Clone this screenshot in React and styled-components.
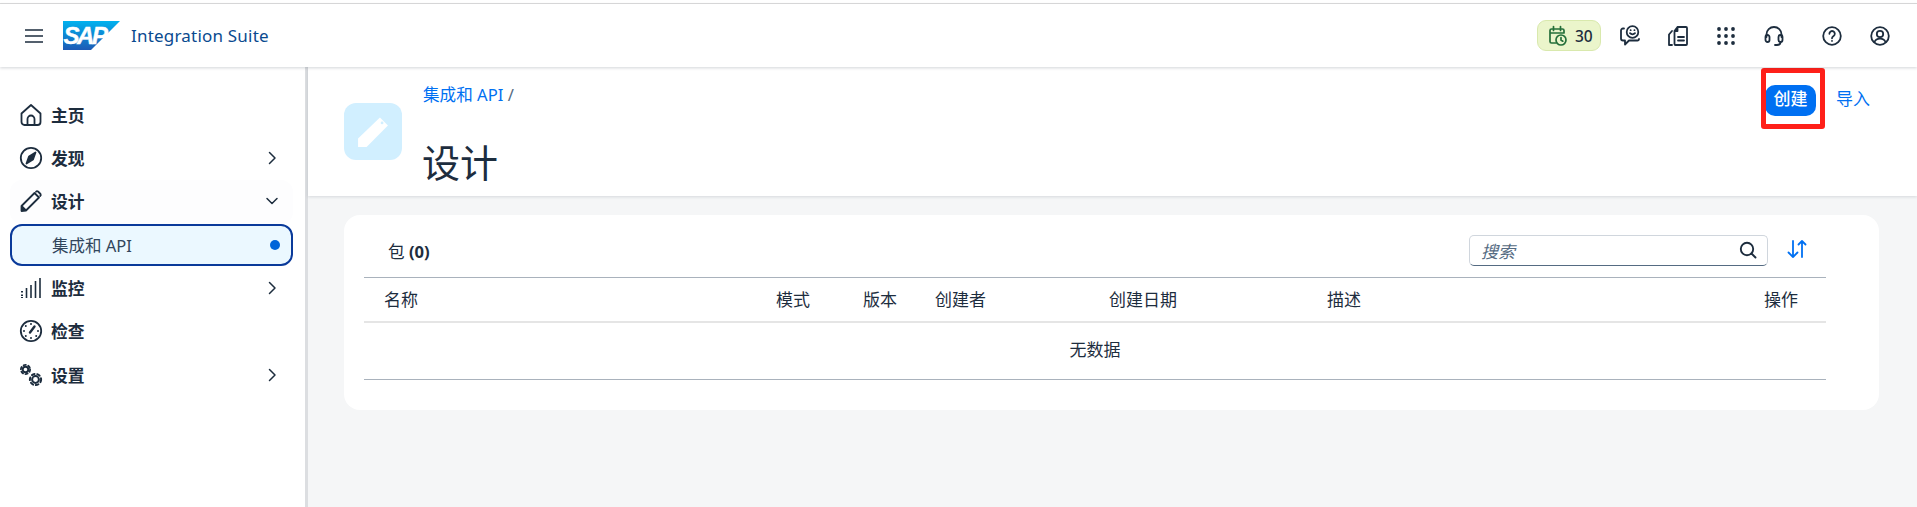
import React from "react";
import styled, { createGlobalStyle } from "styled-components";

const Global = createGlobalStyle`
  html, body { margin: 0; padding: 0; height: 100%; overflow: hidden; background: #fff; }
  * { box-sizing: border-box; }
  body { font-family: "Noto Sans", "Noto Sans CJK SC", sans-serif; font-size: 16.8px; color: #1d2d3e; }
`;

const Page = styled.div`
  width: 1917px; height: 507px; display: flex; flex-direction: column; overflow: hidden; position: relative;
`;
const TopRule = styled.div`
  height: 4px; flex: none; background: #fff; border-bottom: 1px solid #dcdcdc; 
`;
const Shell = styled.header`
  height: 63px; flex: none; display: flex; align-items: center; background: #fff; position: relative; z-index: 3;
  box-shadow: 0 1px 3px rgba(30, 40, 60, 0.2); padding: 0 13px 0 25px;
`;
const Burger = styled.svg`width: 18px; height: 14px; flex: none; margin-right: 20px;`;
const Logo = styled.svg`width: 57px; height: 29px; flex: none; margin-right: 11px;`;
const LogoText = styled.text`
  font-family: "Liberation Sans", sans-serif; font-weight: 700; font-style: italic; font-size: 24px; fill: #fff; stroke: #fff; stroke-width: 0.4px; letter-spacing: -2.4px;
`;
const Product = styled.div`font-size: 17px; color: #0a4a8f; letter-spacing: 0.2px; padding-bottom: 1px;`;
const ShellTools = styled.div`margin-left: auto; display: flex; align-items: center;`;
const Trial = styled.div`
  width: 64px; height: 31px; display: flex; align-items: center; gap: 7px; padding-left: 10px;
  background: #ebf5cb; border: 1px solid #d9e9ad; border-radius: 9px; margin-right: 5px;
  font-size: 15.5px; font-weight: 500; color: #1d2d3e;
`;
const Tool = styled.div`
  width: 48px; height: 31px; display: flex; align-items: center; justify-content: center; flex: none;
  margin-left: ${p => p.$gap || 0}px;
`;
const Body = styled.div`flex: 1; display: flex; min-height: 0;`;
const Side = styled.nav`
  width: 308px; flex: none; background: #fff; border-right: 3px solid #dcdee1; padding: 27px 12px 0 10px;
  display: flex; flex-direction: column;
`;
const NavRow = styled.div`
  height: 43.2px; display: flex; align-items: center; padding: 0 13px 2px 9px; font-weight: 700; font-size: 16.8px; color: #1d2d3e;
  border-radius: 12px; background: ${p => p.$soft ? "#fdfdfe" : "transparent"};
`;
const NavIcon = styled.svg`width: 24px; height: 24px; flex: none; margin-right: 8px; color: #1d2d3e;`;
const NavChevron = styled.svg`width: 16px; height: 16px; margin-left: auto; flex: none;`;
const SubRow = styled.div`
  height: 42px; flex: none; margin-bottom: 2px; display: flex; align-items: center; padding: 0 11px 0 40px; font-size: 16.5px; color: #31465c;
  border: 2px solid #0a3a9a; border-radius: 12px; background: #ebf8ff;
`;
const Dot = styled.span`width: 10px; height: 10px; border-radius: 50%; background: #0064d9; margin-left: auto;`;
const Main = styled.main`flex: 1; background: #f5f6f7; min-width: 0; display: flex; flex-direction: column;`;
const PageHead = styled.div`
  height: 129px; flex: none; background: #fff; position: relative; display: flex; padding-left: 36px;
  box-shadow: 0 1px 3px rgba(30, 40, 60, 0.14);
`;
const PageBadge = styled.div`
  width: 58px; height: 57px; margin-top: 36px; border-radius: 12px; background: #d1efff; flex: none;
  display: flex; align-items: center; justify-content: center;
`;
const TitleCol = styled.div`margin-left: 21px; display: flex; flex-direction: column;`;
const Crumb = styled.div`
  height: 24px; margin-top: 16px; line-height: 24px; font-size: 16.6px; color: #0070f2; white-space: nowrap;
  & > span { color: #556b82; }
`;
const Title = styled.h1`
  margin: 30px 0 0 -1px; font-size: 38px; line-height: 50px; font-weight: 400; color: #1d2d3e; letter-spacing: 0;
`;
const Actions = styled.div`
  margin-left: auto; margin-right: 47px; height: 31px; margin-top: 18px; display: flex; align-items: center; gap: 20px;
`;
const Primary = styled.button`
  width: 51px; height: 31px; border: 0; border-radius: 10px; background: #0070f2; color: #fff; padding: 0 0 4px;
  font: 500 17px/24px "Noto Sans", "Noto Sans CJK SC", sans-serif;
`;
const Ghost = styled.button`
  border: 0; background: none; padding: 0 0 4px; color: #0070f2; font: 400 17px/24px "Noto Sans", "Noto Sans CJK SC", sans-serif;
`;
const Marker = styled.div`
  position: absolute; left: 1453px; top: 1px; width: 64px; height: 61px; border: 5px solid #ff2019; border-radius: 3px; pointer-events: none;
`;
const Card = styled.section`
  margin: 19px 38px 0 36px; height: 195px; background: #fff; border-radius: 16px; padding-left: 20px; padding-right: 53px;
`;
const CardBar = styled.div`
  height: 62px; display: flex; align-items: center; padding: 10px 0 0 24px;
`;
const CardTitle = styled.div`
  font-size: 16.6px; & b { font-weight: 700; }
`;
const Search = styled.div`
  margin-left: auto; width: 299px; height: 31px; border: 1px solid #d0d6dd; border-bottom: 1px solid #556b82; border-radius: 5px;
  display: flex; align-items: center; padding: 0 10px 0 11px; margin-top: -2px;
  font-style: italic; font-size: 17px; color: #556b82;
`;
const SearchGlyph = styled.svg`margin-left: auto; width: 18px; height: 18px; flex: none;`;
const SortBtn = styled.svg`width: 22px; height: 22px; flex: none; margin: -4px 18px 0 18px;`;
const Row = styled.div`
  display: grid; grid-template-columns: 392px 87px 72px 174px 218px 1fr 62px;
  height: 46px; align-items: center; padding: 0 0 2px 20px; border-top: 1px solid #a9b2bc; border-bottom: 2px solid #e5e5e5;
  font-size: 17px; color: #1d2d3e;
`;
const Empty = styled.div`
  height: 57px; border-bottom: 1px solid #a9b2bc; display: flex; align-items: center; justify-content: center;
  font-size: 17px; padding-bottom: 6px; color: #1d2d3e;
`;

const Chevron = ({ down }) => (
  <NavChevron viewBox="0 0 16 16" fill="none" stroke="#1d2d3e" strokeWidth="1.5" strokeLinecap="round" strokeLinejoin="round">
    <path d={down ? "M3 5.5l5 5 5-5" : "M5.5 2.5l5.5 5.5-5.5 5.5"} />
  </NavChevron>
);
const Stroke = { fill: "none", stroke: "#1d2d3e", strokeWidth: 1.8, strokeLinecap: "round", strokeLinejoin: "round" };
const Nav = ({ children, ...p }) => <NavIcon viewBox="0 0 24 24" {...Stroke} {...p}>{children}</NavIcon>;

export default function App() {
  return (
    <Page>
      <Global />
      <TopRule />
      <Shell>
        <Burger viewBox="0 0 18 14"><path d="M0 1h18M0 7h18M0 13h18" stroke="#1d2d3e" strokeWidth="1.7" /></Burger>
        <Logo viewBox="0 0 57 29">
          <defs>
            <linearGradient id="sapg" x1="0" y1="0" x2="0" y2="1">
              <stop offset="0" stopColor="#00b2ef" />
              <stop offset="1" stopColor="#1d5ab5" />
            </linearGradient>
          </defs>
          <polygon points="0,0 57,0 28,29 0,29" fill="url(#sapg)" />
          <LogoText x="0.5" y="23">SAP</LogoText>
        </Logo>
        <Product>Integration Suite</Product>
        <ShellTools>
          <Trial>
            <svg width="20" height="22" viewBox="0 0 20 22" fill="none" stroke="#256f3a" strokeWidth="1.7" strokeLinecap="round">
              <path d="M8 18H3.5A1.5 1.5 0 0 1 2 16.5V5.5A1.5 1.5 0 0 1 3.5 4h11A1.5 1.5 0 0 1 16 5.500V8M5.500 1.500v4M12.500 1.500v4M2 8h14" />
              <circle cx="13" cy="15" r="5" />
              <path d="M13 12.500V15l1.800 1.200" />
            </svg>
            <span>30</span>
          </Trial>
          <Tool>
            <svg width="22" height="22" viewBox="0 0 22 22" {...Stroke}>
              <path d="M5 3.500H4A2 2 0 0 0 2 5.500v8A2 2 0 0 0 4 15.500h2v4l4-4h8.500a1.500 1.500 0 0 0 1.500-1.500" />
              <circle cx="13.500" cy="7" r="5.800" />
              <path d="M11 8.200c1.300 1.500 3.700 1.500 5 0" />
              <path d="M11.600 5.200h.1M15.400 5.200h.1" />
            </svg>
          </Tool>
          <Tool>
            <svg width="22" height="22" viewBox="0 0 22 22" {...Stroke}>
              <path d="M10.500 2H19a1 1 0 0 1 1 1v16a1 1 0 0 1-1 1H8.500a1 1 0 0 1-1-1V6zM10.500 2v4h-3" />
              <path d="M5 6L2 9.500V20h3" />
              <path d="M11 12h6M11 15.500h6" />
            </svg>
          </Tool>
          <Tool>
            <svg width="18" height="18" viewBox="0 0 18 18" fill="#1d2d3e">
              {[2, 9, 16].flatMap(y => [2, 9, 16].map(x => <circle key={`${x}-${y}`} cx={x} cy={y} r="1.900" />))}
            </svg>
          </Tool>
          <Tool>
            <svg width="22" height="22" viewBox="0 0 22 22" {...Stroke}>
              <path d="M3.500 12V9.500a7.500 7.500 0 0 1 15 0V12" />
              <rect x="2.500" y="10" width="4" height="7" rx="2" />
              <rect x="15.500" y="10" width="4" height="7" rx="2" />
              <path d="M17.500 17c0 2-1.500 3-3.500 3h-2" />
            </svg>
          </Tool>
          <Tool $gap={10}>
            <svg width="20" height="20" viewBox="0 0 20 20" {...Stroke}>
              <circle cx="10" cy="10" r="8.800" />
              <path d="M7.400 7.800a2.700 2.700 0 1 1 4.200 2.200c-1 .7-1.600 1.100-1.600 2.300" />
              <path d="M10 14.800v.1" />
            </svg>
          </Tool>
          <Tool>
            <svg width="20" height="20" viewBox="0 0 20 20" {...Stroke}>
              <circle cx="10" cy="10" r="8.800" />
              <circle cx="10" cy="8" r="3.200" />
              <path d="M4.500 16c1-2.500 3-3.300 5.500-3.300s4.500.8 5.500 3.300" />
            </svg>
          </Tool>
        </ShellTools>
      </Shell>
      <Body>
        <Side>
          <NavRow>
            <Nav>
              <path d="M2.500 10.500L12 2l9.500 8.500V19a3 3 0 0 1-3 3h-13a3 3 0 0 1-3-3z" />
              <path d="M8.500 22v-6a3.500 3.500 0 0 1 7 0v6" />
            </Nav>
            主页
          </NavRow>
          <NavRow>
            <Nav>
              <circle cx="12" cy="12" r="10.200" />
              <path d="M16.500 6.500l-2.500 7-6.500 4 2.500-7z" fill="#1d2d3e" />
            </Nav>
            发现
            <Chevron />
          </NavRow>
          <NavRow $soft>
            <Nav>
              <path d="M3 16.500L15.500 4l4.500 4.500L7.500 21H3z" />
              <path d="M17 2.800a1.500 1.500 0 0 1 2-.3l2.500 2.500a1.500 1.500 0 0 1-.3 2" />
              <path d="M2.500 17l4.500 4.500L2.500 22z" fill="#1d2d3e" />
            </Nav>
            设计
            <Chevron down />
          </NavRow>
          <SubRow>集成和 API<Dot /></SubRow>
          <NavRow>
            <Nav strokeLinecap="butt" strokeWidth="1.6">
              <path d="M21 2v20M16.500 5v17M12 9v13M7.500 12v10" />
              <path d="M3 15v1.600M3 18.500v1.500M3 21v1" strokeWidth="2" />
            </Nav>
            监控
            <Chevron />
          </NavRow>
          <NavRow>
            <Nav>
              <circle cx="12" cy="12" r="10.200" />
              <path d="M11 13.500l4.500-6" strokeWidth="2.400" />
              <path d="M12 5v.1M6.800 7v.1M5 12v.1M6.800 17v.1M12 19v.1M17.200 17v.1M19 12v.1" strokeWidth="2" />
            </Nav>
            检查
          </NavRow>
          <NavRow>
            <Nav strokeWidth="2">
              <circle cx="6.500" cy="6.500" r="2.800" />
              <circle cx="6.500" cy="6.500" r="4.600" strokeWidth="1.800" strokeDasharray="2.300 2.500" />
              <circle cx="16.500" cy="16.500" r="3.400" />
              <circle cx="16.500" cy="16.500" r="5.600" strokeWidth="2" strokeDasharray="2.700 2.800" />
            </Nav>
            设置
            <Chevron />
          </NavRow>
        </Side>
        <Main>
          <PageHead>
            <PageBadge>
              <svg width="32" height="32" viewBox="0 0 30 30">
                <path d="M21.500 1.500l7.500 7.500L9 29H1v-8z" fill="#fff" />
                <circle cx="23.500" cy="6.500" r="1.300" fill="#d1efff" />
              </svg>
            </PageBadge>
            <TitleCol>
              <Crumb>集成和 API <span>/</span></Crumb>
              <Title>设计</Title>
            </TitleCol>
            <Actions>
              <Primary>创建</Primary>
              <Ghost>导入</Ghost>
            </Actions>
            <Marker />
          </PageHead>
          <Card>
            <CardBar>
              <CardTitle>包 <b>(0)</b></CardTitle>
              <Search>
                搜索
                <SearchGlyph viewBox="0 0 18 18" fill="none" stroke="#1d2d3e" strokeWidth="1.900" strokeLinecap="round">
                  <circle cx="8" cy="8" r="6.200" />
                  <path d="M12.500 12.500L16.500 16.500" />
                </SearchGlyph>
              </Search>
              <SortBtn viewBox="0 0 22 22" fill="none" stroke="#0070f2" strokeWidth="1.800" strokeLinecap="round" strokeLinejoin="round">
                <path d="M7 3v16M2.500 14.500L7 19l4.500-4.500" />
                <path d="M16 19V3M12.500 6.500L16 3l3.500 3.500" />
              </SortBtn>
            </CardBar>
            <Row>
              <span>名称</span><span>模式</span><span>版本</span><span>创建者</span><span>创建日期</span><span>描述</span><span>操作</span>
            </Row>
            <Empty>无数据</Empty>
          </Card>
        </Main>
      </Body>
    </Page>
  );
}
